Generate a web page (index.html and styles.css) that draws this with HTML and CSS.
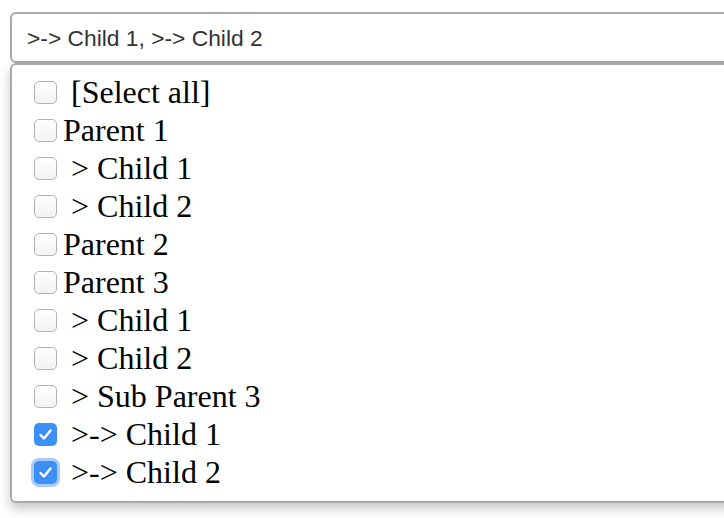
FILE: index.html
```html
<!DOCTYPE html>
<html>
<head>
<meta charset="utf-8">
<link rel="stylesheet" href="styles.css">
</head>
<body>
<div class="select">
  <div class="field">&gt;-&gt; Child 1, &gt;-&gt; Child 2</div>
  <ul class="menu">
    <li class="row"><span class="box"></span><span class="label"> [Select all]</span></li>
    <li class="row"><span class="box"></span><span class="label">Parent 1</span></li>
    <li class="row"><span class="box"></span><span class="label"> &gt; Child 1</span></li>
    <li class="row"><span class="box"></span><span class="label"> &gt; Child 2</span></li>
    <li class="row"><span class="box"></span><span class="label">Parent 2</span></li>
    <li class="row"><span class="box"></span><span class="label">Parent 3</span></li>
    <li class="row"><span class="box"></span><span class="label"> &gt; Child 1</span></li>
    <li class="row"><span class="box"></span><span class="label"> &gt; Child 2</span></li>
    <li class="row"><span class="box"></span><span class="label"> &gt; Sub Parent 3</span></li>
    <li class="row"><span class="box checked"><svg viewBox="0 0 23 23" width="23" height="23"><path d="M6.5 12 L10 15.5 L16.5 7.5" fill="none" stroke="#fff" stroke-width="2.4" stroke-linecap="round" stroke-linejoin="round"/></svg></span><span class="label"> &gt;-&gt; Child 1</span></li>
    <li class="row"><span class="box checked focus"><svg viewBox="0 0 23 23" width="23" height="23"><path d="M6.5 12 L10 15.5 L16.5 7.5" fill="none" stroke="#fff" stroke-width="2.4" stroke-linecap="round" stroke-linejoin="round"/></svg></span><span class="label"> &gt;-&gt; Child 2</span></li>
  </ul>
</div>
</body>
</html>
```

FILE: styles.css
```css
html, body {
  margin: 0;
  padding: 0;
  overflow: hidden;
  background: #fff;
}
body {
  width: 724px;
  height: 518px;
}
.select {
  margin: 12px 0 0 10px;
  width: 740px;
}
.field {
  box-sizing: border-box;
  height: 51px;
  border: 2px solid #aaaaaa;
  border-radius: 6px;
  padding: 1px 0 0 15px;
  display: flex;
  align-items: center;
  font-family: "Liberation Sans", Arial, sans-serif;
  font-size: 22.8px;
  color: #333;
  white-space: pre;
}
.menu {
  list-style: none;
  margin: 0;
  box-sizing: border-box;
  height: 440px;
  border: 2px solid #aaaaaa;
  border-radius: 6px;
  padding: 8px 0 8px 22px;
  box-shadow: 0 6px 12px rgba(0, 0, 0, 0.22);
  background: #fff;
}
.row {
  height: 38px;
  display: flex;
  align-items: center;
  font-family: "Liberation Serif", "Times New Roman", serif;
  font-size: 32px;
  color: #000;
}
.box {
  box-sizing: border-box;
  width: 23px;
  height: 23px;
  border: 1px solid #b3b3b3;
  border-radius: 5px;
  background: linear-gradient(#ffffff, #f2f2f2);
  margin-right: 6px;
  flex: none;
  display: flex;
}
.box.checked {
  border: none;
  background: #3b8ff6;
}
.box.focus {
  box-shadow: 0 0 0 3px rgba(59, 143, 246, 0.45);
}
.label {
  white-space: pre;
  line-height: 38px;
}
```
